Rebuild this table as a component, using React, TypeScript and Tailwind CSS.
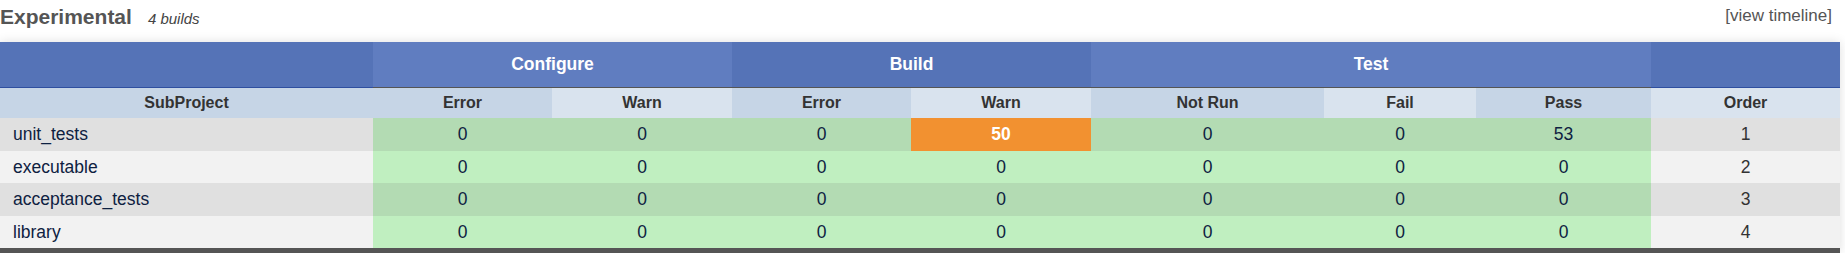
import React from "react";

const rows = [
  { name: "unit_tests", vals: [0, 0, 0, 50, 0, 0, 53], order: 1, h: "h-[33px]" },
  { name: "executable", vals: [0, 0, 0, 0, 0, 0, 0], order: 2, h: "h-[32px]" },
  { name: "acceptance_tests", vals: [0, 0, 0, 0, 0, 0, 0], order: 3, h: "h-[33px]" },
  { name: "library", vals: [0, 0, 0, 0, 0, 0, 0], order: 4, h: "h-[32px]" },
];

const subHeads = [
  { t: "SubProject", dark: true },
  { t: "Error", dark: true },
  { t: "Warn", dark: false },
  { t: "Error", dark: true },
  { t: "Warn", dark: false },
  { t: "Not Run", dark: true },
  { t: "Fail", dark: false },
  { t: "Pass", dark: true },
  { t: "Order", dark: false },
];

export default function App() {
  return (
    <div className="w-[1845px] h-[253px] bg-white overflow-hidden" style={{ fontFamily: '"Liberation Sans", Arial, sans-serif' }}>
      <div className="flex justify-between items-start h-[42px] pr-[13px]">
        <div className="flex items-baseline pt-[6px]">
          <span className="text-[21px] leading-[21px] font-bold text-[#555555]">Experimental</span>
          <span className="ml-[16px] text-[15px] leading-[15px] italic text-[#444444]">4 builds</span>
        </div>
        <div className="pt-[7px] text-[17px] leading-[17px] text-[#555555]">[view timeline]</div>
      </div>
      <div className="w-[1840px] shadow-[0_0_10px_rgba(0,0,0,0.13)]">
        <div className="grid grid-cols-[373px_179px_180px_179px_180px_233px_152px_175px_189px]">
          <div className="h-[46px] bg-[#5573b7] border-b border-[#2f4f9f]" />
          <div className="col-span-2 h-[46px] bg-[#607dc0] border-b border-[#555555] flex items-center justify-center text-white font-bold text-[17.5px]">Configure</div>
          <div className="col-span-2 h-[46px] bg-[#5573b7] border-b border-[#555555] flex items-center justify-center text-white font-bold text-[17.5px]">Build</div>
          <div className="col-span-3 h-[46px] bg-[#607dc0] border-b border-[#555555] flex items-center justify-center text-white font-bold text-[17.5px]">Test</div>
          <div className="h-[46px] bg-[#5573b7] border-b border-[#2f4f9f]" />
          {subHeads.map((s, i) => (
            <div
              key={i}
              className={`h-[30px] flex items-center justify-center font-bold text-[16px] text-[#333333] ${s.dark ? "bg-[#c6d5e6]" : "bg-[#d9e3ee]"}`}
            >
              {s.t}
            </div>
          ))}
          {rows.map((r, ri) => {
            const odd = ri % 2 === 0;
            return (
              <React.Fragment key={r.name}>
                <div className={`${r.h} flex items-center pl-[13px] text-[17.5px] text-[#0e2141] ${odd ? "bg-[#e0e0e0]" : "bg-[#f2f2f2]"}`}>{r.name}</div>
                {r.vals.map((v, vi) => {
                  const warn = vi === 3 && v > 0;
                  return (
                    <div
                      key={vi}
                      className={`${r.h} flex items-center justify-center text-[17.5px] ${
                        warn
                          ? "bg-[#f29130] text-white font-bold"
                          : odd
                          ? "bg-[#b3dbb3] text-[#0e2141]"
                          : "bg-[#c0efc0] text-[#0e2141]"
                      }`}
                    >
                      {v}
                    </div>
                  );
                })}
                <div className={`${r.h} flex items-center justify-center text-[17.5px] text-[#333333] ${odd ? "bg-[#e0e0e0]" : "bg-[#f2f2f2]"}`}>{r.order}</div>
              </React.Fragment>
            );
          })}
        </div>
        <div className="h-[5px] bg-[#555555]" />
      </div>
    </div>
  );
}
